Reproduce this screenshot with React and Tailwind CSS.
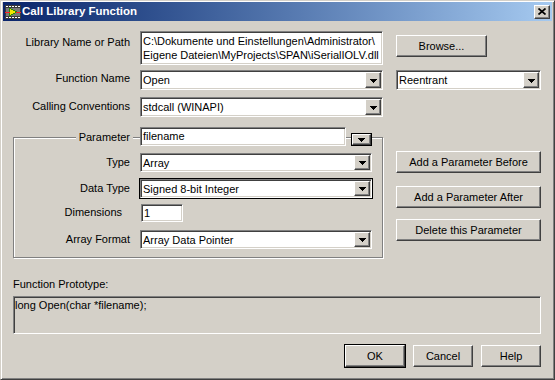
const sunken =
  "border border-t-[#808080] border-l-[#808080] border-b-white border-r-white shadow-[inset_1px_1px_0_#404040,inset_-1px_-1px_0_#d4d0c8] p-[1px]";
const raised =
  "border border-t-white border-l-white border-b-[#404040] border-r-[#404040] shadow-[inset_-1px_-1px_0_#808080] bg-[#d4d0c8]";

function Triangle() {
  return (
    <svg width="7" height="4" viewBox="0 0 7 4" shapeRendering="crispEdges">
      <path d="M0 0h7v1H0zM1 1h5v1H1zM2 2h3v1H2zM3 3h1v1H3z" fill="#000" />
    </svg>
  );
}

function ArrowBtn({ className = "" }) {
  return (
    <div className={`${raised} flex items-center justify-center pt-[1px] ${className}`}>
      <Triangle />
    </div>
  );
}

function Select({ value, className = "" }) {
  return (
    <div className={`${sunken} bg-white flex items-stretch ${className}`}>
      <div className="flex-1 self-center pl-[1px] leading-[14px] whitespace-nowrap overflow-hidden">{value}</div>
      <ArrowBtn className="w-[16px]" />
    </div>
  );
}

function Button({ children, className = "" }) {
  return (
    <div className={`${raised} h-[22px] flex items-center justify-center ${className}`}>{children}</div>
  );
}

function LvIcon() {
  return (
    <svg width="16" height="16" viewBox="0 0 16 16" shapeRendering="crispEdges">
      <rect x="0" y="1" width="16" height="14" fill="#3a3a3a" />
      {[1, 4, 7, 10, 13].map((x) => (
        <g key={x}>
          <rect x={x} y="2" width="2" height="1" fill="#fff" />
          <rect x={x} y="13" width="2" height="1" fill="#fff" />
        </g>
      ))}
      <rect x="1" y="4" width="14" height="8" fill="#7a7a7a" />
      <path d="M4 4 L12 8 L4 12 Z" fill="#f2e600" stroke="#2a8a00" strokeWidth="1" />
      <rect x="0" y="8" width="5" height="1" fill="#ff2020" />
      <rect x="11" y="8" width="5" height="1" fill="#ff2020" />
    </svg>
  );
}

export default function App() {
  return (
    <div className="w-[555px] h-[380px] overflow-hidden bg-[#d4d0c8] border border-t-[#d4d0c8] border-l-[#d4d0c8] border-b-[#404040] border-r-[#404040] shadow-[inset_1px_1px_0_white,inset_-1px_-1px_0_#808080] px-[2px] pt-[1px] font-['Liberation_Sans',Arial,sans-serif] text-[11px] leading-[13px] text-black">
      {/* title bar */}
      <div className="h-[19px] flex items-center bg-linear-to-r from-[#0a246a] to-[#a6caf0] pl-[2px] pr-[2px]">
        <LvIcon />
        <span className="ml-[1px] text-white font-bold text-[11.5px]">Call Library Function</span>
        <div className={`${raised} ml-auto w-[16px] h-[14px] flex items-center justify-center`}>
          <svg width="8" height="7" viewBox="0 0 8 7">
            <path d="M0.5 0.5L7.5 6.5M7.5 0.5L0.5 6.5" stroke="#000" strokeWidth="1.7" />
          </svg>
        </div>
      </div>

      <div className="pl-[10px] pr-[11px]">
        {/* library path */}
        <div className="mt-[10px] flex items-start">
          <div className="w-[117px] text-right pt-[5px]">Library Name or Path</div>
          <div className={`${sunken} ml-[10px] w-[243px] h-[34px] bg-white`}>
            <div className="pl-[1px] pt-[1px] leading-[14px] whitespace-nowrap">
              {"C:\\Dokumente und Einstellungen\\Administrator\\"}
              <br />
              {"Eigene Dateien\\MyProjects\\SPAN\\iSerialIOLV.dll"}
            </div>
          </div>
          <Button className="ml-[13px] mt-[4px] w-[91px]">Browse...</Button>
        </div>

        {/* function name */}
        <div className="mt-[5px] flex items-start">
          <div className="w-[117px] text-right pt-[2px]">Function Name</div>
          <Select value="Open" className="ml-[10px] w-[243px] h-[20px]" />
          <Select value="Reentrant" className="ml-[13px] w-[145px] h-[20px]" />
        </div>

        {/* calling conventions */}
        <div className="mt-[7px] flex items-start">
          <div className="w-[117px] text-right pt-[3px]">Calling Conventions</div>
          <Select value="stdcall (WINAPI)" className="ml-[10px] w-[243px] h-[20px]" />
        </div>

        {/* parameter group + buttons */}
        <div className="mt-[20px] flex items-start">
          <div className="w-[370px] h-[121px] border border-[#808080] shadow-[inset_1px_1px_0_white,1px_1px_0_white]">
            <div className="-mt-[11px] flex items-start">
              <div className="w-[119px] text-right pt-[4px]">
                <span className="bg-[#d4d0c8] px-[3px]">Parameter</span>
              </div>
              <div className={`${sunken} ml-[7px] w-[206px] h-[19px] bg-white`}>
                <div className="pl-[1px] leading-[15px]">filename</div>
              </div>
              <div className="ml-[5px] mt-[6px] w-[21px] h-[13px] border border-black flex">
                <ArrowBtn className="flex-1" />
              </div>
            </div>

            <div className="mt-[7px] flex items-start">
              <div className="w-[116px] text-right pt-[3px]">Type</div>
              <Select value="Array" className="ml-[10px] w-[232px] h-[19px]" />
            </div>

            <div className="mt-[7px] flex items-start">
              <div className="w-[116px] text-right pt-[3px]">Data Type</div>
              <Select value="Signed 8-bit Integer" className="ml-[10px] w-[232px] h-[19px] outline outline-black" />
            </div>

            <div className="mt-[6px] flex items-start">
              <div className="w-[108px] text-right pt-[2px]">Dimensions</div>
              <div className={`${sunken} ml-[19px] w-[42px] h-[18px] bg-white`}>
                <div className="pl-[1px] leading-[14px]">1</div>
              </div>
            </div>

            <div className="mt-[8px] flex items-start">
              <div className="w-[116px] text-right pt-[3px]">Array Format</div>
              <Select value="Array Data Pointer" className="ml-[10px] w-[232px] h-[19px]" />
            </div>
          </div>

          <div className="ml-[13px] mt-[14px] flex flex-col">
            <Button className="w-[145px]">Add a Parameter Before</Button>
            <Button className="w-[145px] mt-[13px]">Add a Parameter After</Button>
            <Button className="w-[145px] mt-[11px]">Delete this Parameter</Button>
          </div>
        </div>

        {/* prototype */}
        <div className="mt-[20px]">Function Prototype:</div>
        <div className={`${sunken} mt-[5px] w-[528px] h-[38px]`}>
          <div className="pt-[1px]">long Open(char *filename);</div>
        </div>

        {/* dialog buttons */}
        <div className="mt-[11px] flex justify-end gap-[8px]">
          <Button className="w-[60px] outline outline-black">OK</Button>
          <Button className="w-[60px]">Cancel</Button>
          <Button className="w-[60px]">Help</Button>
        </div>
      </div>
    </div>
  );
}
